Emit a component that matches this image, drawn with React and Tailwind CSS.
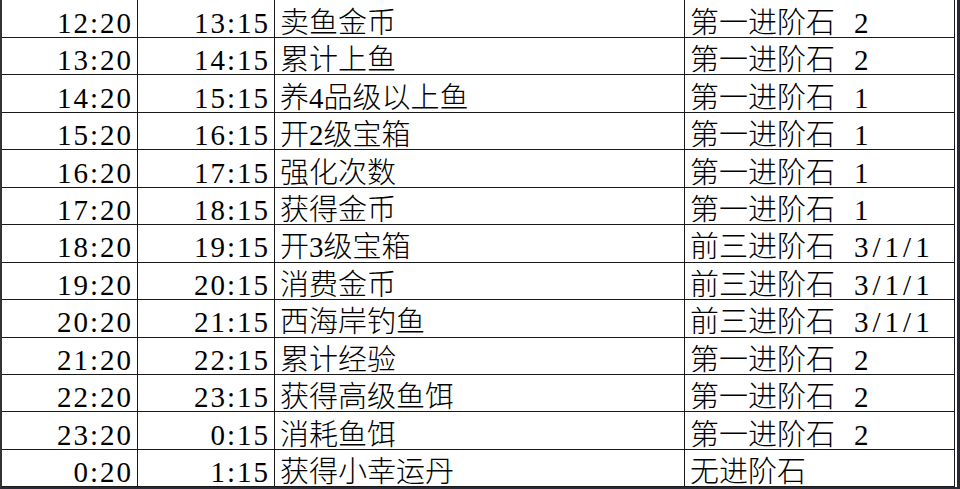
const rows = [
  ['12:20', '13:15', '卖鱼金币', '第一进阶石', '2'],
  ['13:20', '14:15', '累计上鱼', '第一进阶石', '2'],
  ['14:20', '15:15', '养4品级以上鱼', '第一进阶石', '1'],
  ['15:20', '16:15', '开2级宝箱', '第一进阶石', '1'],
  ['16:20', '17:15', '强化次数', '第一进阶石', '1'],
  ['17:20', '18:15', '获得金币', '第一进阶石', '1'],
  ['18:20', '19:15', '开3级宝箱', '前三进阶石', '3/1/1'],
  ['19:20', '20:15', '消费金币', '前三进阶石', '3/1/1'],
  ['20:20', '21:15', '西海岸钓鱼', '前三进阶石', '3/1/1'],
  ['21:20', '22:15', '累计经验', '第一进阶石', '2'],
  ['22:20', '23:15', '获得高级鱼饵', '第一进阶石', '2'],
  ['23:20', '0:15', '消耗鱼饵', '第一进阶石', '2'],
  ['0:20', '1:15', '获得小幸运丹', '无进阶石', ''],
]

const cell = 'flex items-center border-r border-b border-[#1a1a1a] pt-[9px] whitespace-nowrap overflow-hidden'

export default function App() {
  return (
    <div className="w-[960px] h-[489px] overflow-hidden bg-white border-l-2 border-r-[3px] border-b-2 border-l-[#333] border-r-[#2a2a33] border-b-[#2a2a3a]">
      <div
        className="grid grid-cols-[136px_137px_410px_270px] grid-rows-[38px_repeat(12,37.45px)] text-[29px] leading-none text-black font-light"
        style={{ fontFamily: '"Liberation Serif", "Noto Sans CJK SC", serif' }}
      >
        {rows.map((r, i) => (
          <div key={i} className="contents">
            <div className={`${cell} justify-end pr-[4px] tracking-[2px]`}>{r[0]}</div>
            <div className={`${cell} justify-end pr-[4px] tracking-[2px]`}>{r[1]}</div>
            <div className={`${cell} pl-[5px]`}>{r[2]}</div>
            <div className={`${cell} pl-[5px]`}>
              {r[3]}
              {r[4] && <span className="ml-[19px] tracking-[4px]">{r[4]}</span>}
            </div>
          </div>
        ))}
      </div>
    </div>
  )
}
